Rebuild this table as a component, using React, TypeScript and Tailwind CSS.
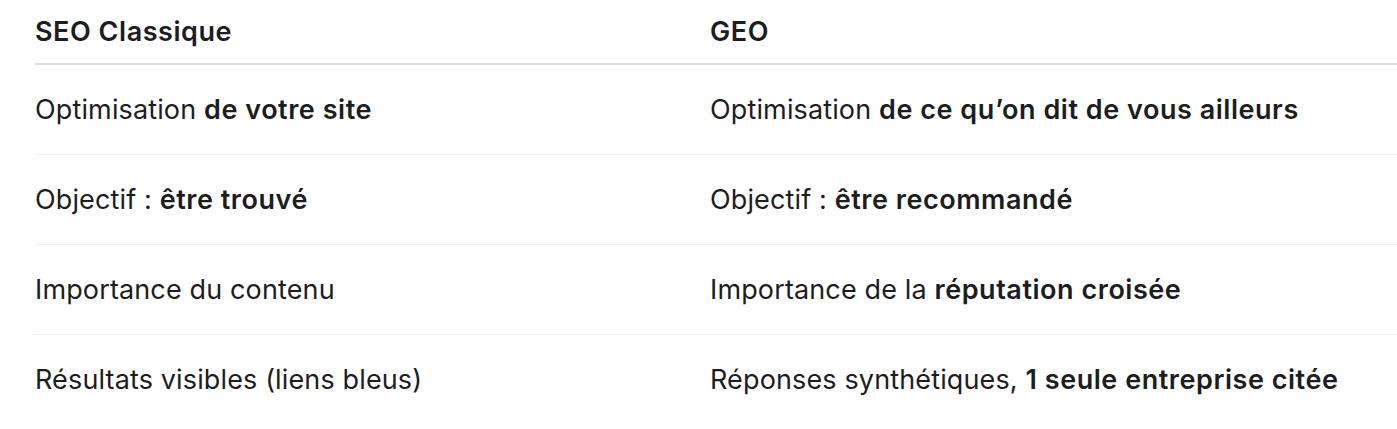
import React from "react";

const B = ({ children }: { children: React.ReactNode }) => (
  <strong className="font-semibold tracking-[0.02em]">{children}</strong>
);

const rows: { seo: React.ReactNode; geo: React.ReactNode }[] = [
  {
    seo: (
      <>
        Optimisation <B>de votre site</B>
      </>
    ),
    geo: (
      <>
        Optimisation <B>de ce qu’on dit de vous ailleurs</B>
      </>
    ),
  },
  {
    seo: (
      <>
        Objectif : <B>être trouvé</B>
      </>
    ),
    geo: (
      <>
        Objectif : <B>être recommandé</B>
      </>
    ),
  },
  {
    seo: <>Importance du contenu</>,
    geo: (
      <>
        Importance de la <B>réputation croisée</B>
      </>
    ),
  },
  {
    seo: <>Résultats visibles (liens bleus)</>,
    geo: (
      <>
        Réponses synthétiques, <B>1 seule entreprise citée</B>
      </>
    ),
  },
];

export default function App() {
  return (
    <div className="w-full overflow-hidden bg-white font-['Inter',sans-serif] text-[#1d1d1f]">
      <table className="ml-[35px] w-[1400px] border-collapse text-left text-[27px] leading-[31px] tracking-[0.005em]">
        <thead>
          <tr className="border-b-2 border-[#dcdcdc]">
            <th className="w-[675px] py-4 font-semibold tracking-[0.02em]">SEO Classique</th>
            <th className="py-4 font-semibold tracking-[0.02em]">GEO</th>
          </tr>
        </thead>
        <tbody>
          {rows.map((r, i) => (
            <tr key={i} className={i < rows.length - 1 ? "border-b border-[#f0f0f0]" : ""}>
              <td className="py-[29px]">{r.seo}</td>
              <td className="py-[29px]">{r.geo}</td>
            </tr>
          ))}
        </tbody>
      </table>
    </div>
  );
}
